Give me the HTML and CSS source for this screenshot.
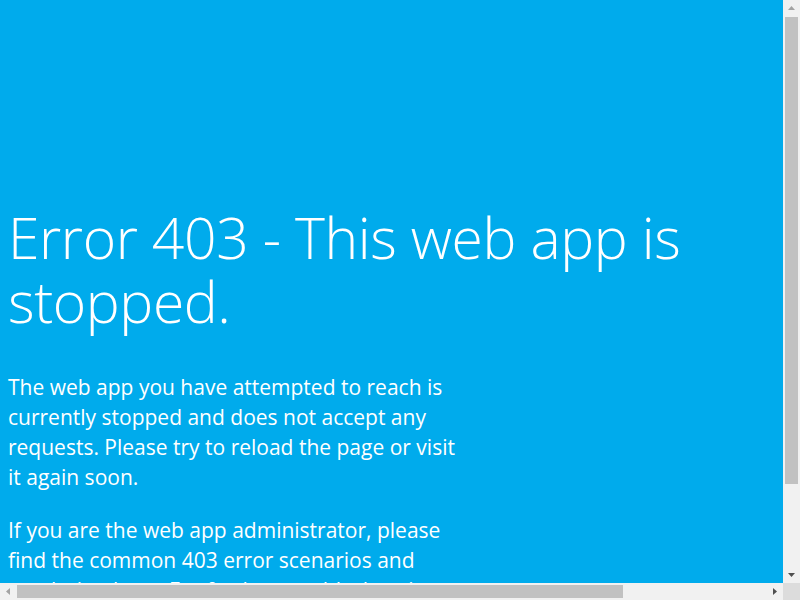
FILE: index.html
```
<!DOCTYPE html>
<html lang="en">
<head>
    <meta charset="UTF-8">
    <title>Microsoft Azure Web App - Error 403</title>
    <link rel="stylesheet" href="styles.css">
</head>
<body>
    <div class="window">
        <div class="viewport">
            <div class="feature">
                <div class="content">
                    <h1>Error 403 - This web app is stopped.</h1>
                    <p>The web app you have attempted to reach is currently stopped and does not accept any requests. Please try to reload the page or visit it again soon.</p>
                    <p>If you are the web app administrator, please find the common 403 error scenarios and resolution <a href="#">here</a>. For further troubleshooting tools and recommendations, please visit <a href="#">Azure Portal</a>.</p>
                </div>
            </div>
        </div>

        <div class="vbar">
            <div class="btn">
                <svg width="17" height="17" viewBox="0 0 17 17"><polygon points="5,10 12,10 8.5,6" fill="#a3a3a3"/></svg>
            </div>
            <div class="track vtrack"><div class="thumb"></div></div>
            <div class="btn">
                <svg width="17" height="17" viewBox="0 0 17 17"><polygon points="5,7 12,7 8.5,11" fill="#505050"/></svg>
            </div>
        </div>

        <div class="hbar">
            <div class="btn">
                <svg width="17" height="17" viewBox="0 0 17 17"><polygon points="10,5 10,12 6,8.5" fill="#a3a3a3"/></svg>
            </div>
            <div class="track htrack"><div class="thumb"></div></div>
            <div class="btn">
                <svg width="17" height="17" viewBox="0 0 17 17"><polygon points="7,5 7,12 11,8.5" fill="#505050"/></svg>
            </div>
        </div>

        <div class="corner"></div>
    </div>
</body>
</html>
```

FILE: styles.css
```
html, body {
    margin: 0;
    height: 100%;
    overflow: hidden;
}
body {
    background-color: #00abec;
    font-family: "Open Sans", "Noto Sans", sans-serif;
    color: #ffffff;
}
.window {
    display: grid;
    grid-template-columns: 1fr 17px;
    grid-template-rows: 1fr 17px;
    height: 100vh;
}
.viewport {
    overflow: hidden;
}
.feature {
    width: 960px;
    padding: 205px 0 0 8px;
}
.content {
    width: 465px;
}
.content h1 {
    margin: 0 0 39px 0;
    width: 800px;
    font-size: 57px;
    font-weight: 300;
    letter-spacing: -0.4px;
    line-height: 64px;
}
.content p {
    margin: 0 0 23px 0;
    font-size: 21px;
    line-height: 30px;
}
.content a {
    color: #ffffff;
}

/* fake scrollbars */
.vbar, .hbar {
    display: flex;
    background-color: #f1f1f1;
}
.vbar {
    flex-direction: column;
}
.btn {
    flex: 0 0 17px;
    height: 17px;
}
.btn svg {
    display: block;
}
.track {
    flex: 1;
    display: flex;
}
.vtrack {
    flex-direction: column;
    padding: 0 2px;
}
.vtrack .thumb {
    height: 467px;
    background-color: #c1c1c1;
}
.htrack {
    padding: 2px 0;
}
.htrack .thumb {
    width: 606px;
    background-color: #c1c1c1;
}
.corner {
    background-color: #dcdcdc;
}
```
